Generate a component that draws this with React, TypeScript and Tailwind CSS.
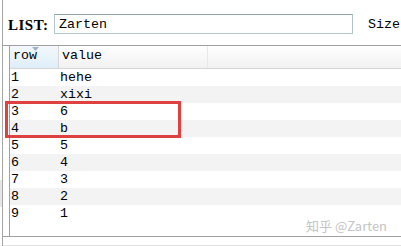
import React from "react";

type Row = { id: number; value: string };

const rows: Row[] = [
  { id: 1, value: "hehe" },
  { id: 2, value: "xixi" },
  { id: 3, value: "6" },
  { id: 4, value: "b" },
  { id: 5, value: "5" },
  { id: 6, value: "4" },
  { id: 7, value: "3" },
  { id: 8, value: "2" },
  { id: 9, value: "1" },
];

const mono = "font-['Liberation_Mono',monospace]";

export default function App() {
  return (
    <div className="relative flex h-[246px] w-[401px] overflow-hidden bg-white text-black">
      {/* window edge */}
      <div className="flex w-[2px] flex-col">
        <div className="h-[180px]" />
        <div className="h-[27px] bg-[#e6e6e6]" />
      </div>
      <div className="w-px bg-[#a6a6a6]" />

      <div className="flex min-w-0 flex-1 flex-col">
        <div className="mt-[14px] flex h-[20px] items-center pl-[5px]">
          <span className="w-[46px] pt-[2px] font-['Liberation_Serif',serif] text-[15px] font-bold leading-none tracking-[0.5px]">
            LIST:
          </span>
          <div className="flex h-[20px] w-[299px] items-center border border-[#b3c6cb] border-t-[#8fa3ab] pl-[4px]">
            <span className={`${mono} pt-[1px] text-[13.33px] leading-none`}>Zarten</span>
          </div>
          <span className={`${mono} ml-[15px] pt-[1px] text-[13.33px] leading-none`}>Size</span>
        </div>

        <div className="mt-[11px] flex h-[192px] flex-col border-y border-[#a0a0a0]">
          <div className="ml-[6px] flex h-full flex-col border-l border-[#a0a0a0]">
            {/* header */}
            <div className={`${mono} flex h-[23px] border-b border-[#d5d5d5] text-[13.33px]`}>
              <div className="relative flex w-[49px] items-end border-r border-[#d5d5d5] bg-gradient-to-b from-[#f3f9fd] to-[#dfeef8] pb-[2px] pl-[3px]">
                <svg className="absolute left-[22px] top-[1px]" width="7" height="4" viewBox="0 0 7 4">
                  <path d="M0 0 L7 0 L3.5 4 Z" fill="#9db4c8" />
                </svg>
                row
              </div>
              <div className="flex w-[149px] items-end border-r border-[#e8e8e8] bg-gradient-to-b from-white to-[#f1f1f1] pb-[2px] pl-[3px]">
                value
              </div>
              <div className="flex-1 bg-gradient-to-b from-white to-[#f1f1f1]" />
            </div>

            {/* rows */}
            {rows.map((row) => (
              <div
                key={row.id}
                className={`${mono} flex h-[17px] items-center pt-[1px] text-[13.33px] leading-none ${
                  row.id % 2 === 0 ? "bg-[#f3f3f3]" : "bg-white"
                }`}
              >
                <span className="w-[50px] pl-[1px]">{row.id}</span>
                <span>{row.value}</span>
              </div>
            ))}
          </div>
        </div>

        <div className="mt-[8px] h-px bg-[#e2e2e2]" />
      </div>

      {/* annotation */}
      <div className="absolute left-[5px] top-[101px] h-[37px] w-[176px] border-[3px] border-[#df4141]" />

      {/* watermark */}
      <div className="absolute left-[306px] top-[218px] font-['Noto_Sans_CJK_SC',sans-serif] text-[13px] leading-[16px] text-[#c4c4c4]">
        知乎 @Zarten
      </div>
    </div>
  );
}
